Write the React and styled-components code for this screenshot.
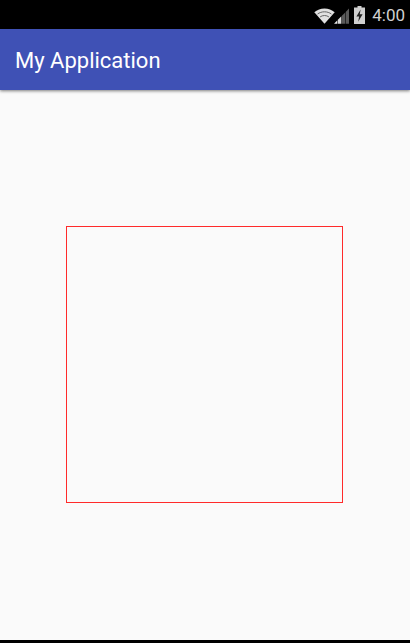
import React from "react";
import styled, { createGlobalStyle } from "styled-components";

const GlobalStyle = createGlobalStyle`
  html, body {
    margin: 0;
    padding: 0;
    background: #000;
  }
`;

const Phone = styled.div`
  display: flex;
  flex-direction: column;
  width: 410px;
  height: 643px;
  overflow: hidden;
  background: #000;
  font-family: Roboto, "Liberation Sans", sans-serif;
`;

const StatusBar = styled.div`
  display: flex;
  align-items: center;
  justify-content: flex-end;
  flex: none;
  height: 29px;
  padding: 1px 5px 0 0;
  box-sizing: border-box;
  background: #000;
`;

const WifiGlyph = styled.svg`
  margin-top: 2px;
`;

const SignalGlyph = styled.svg`
  margin: 2px 0 0 -1px;
`;

const BatteryGlyph = styled.svg`
  margin-left: 5px;
`;

const Clock = styled.span`
  margin-left: 7px;
  font-size: 17px;
  color: #d0d0d0;
`;

const AppBar = styled.header`
  position: relative;
  z-index: 1;
  display: flex;
  align-items: center;
  flex: none;
  height: 61px;
  padding: 1px 0 0 15px;
  box-sizing: border-box;
  background: #3f51b5;
  box-shadow: 0 1px 3px rgba(0, 0, 0, 0.5);
`;

const Title = styled.h1`
  margin: 0;
  font-size: 22px;
  font-weight: 400;
  color: #fff;
`;

const Content = styled.main`
  flex: none;
  height: 550px;
  padding: 136px 0 0 66px;
  box-sizing: border-box;
  background: #fafafa;
`;

const Square = styled.div`
  width: 277px;
  height: 277px;
  box-sizing: border-box;
  border: 1px solid #ff2a2a;
`;

function WifiIcon() {
  return (
    <WifiGlyph width="21" height="16" viewBox="0 0 21 16">
      <path d="M10.5 15.8 0.3 4.2C3.1 1.8 6.6.4 10.5.4s7.4 1.4 10.2 3.8z" fill="#e0e0e0" />
      <path d="M3.6 6C5.5 4.6 7.9 3.8 10.5 3.8s5 .8 6.9 2.2" fill="none" stroke="#666" strokeWidth="1" />
      <path d="M6.1 8.9c1.3-.9 2.8-1.4 4.4-1.4s3.1.5 4.4 1.4" fill="none" stroke="#666" strokeWidth="1" />
    </WifiGlyph>
  );
}

function SignalIcon() {
  return (
    <SignalGlyph width="15" height="16" viewBox="0 0 15 16">
      <path d="M0 15.8 3.4 12.3V15.8z" fill="#e8e8e8" />
      <path d="M3.9 11.8 7.4 8.3V15.8H3.9z" fill="#d8d8d8" />
      <path d="M7.9 7.8 11.2 4.4V15.8H7.9z" fill="#5a5a5a" />
      <path d="M11.7 3.9 15 .6V15.8H11.7z" fill="#5a5a5a" />
    </SignalGlyph>
  );
}

function BatteryIcon() {
  return (
    <BatteryGlyph width="11" height="18" viewBox="0 0 11 18">
      <path d="M3.5 0h4v1.5H11V18H0V1.5h3.5z" fill="#cfcfcf" />
      <path d="M6.6 3.5 2.4 10.4h2.7L4.2 15.8 8.6 8.2H5.8z" fill="#222" />
    </BatteryGlyph>
  );
}

export default function App() {
  return (
    <Phone>
      <GlobalStyle />
      <StatusBar>
        <WifiIcon />
        <SignalIcon />
        <BatteryIcon />
        <Clock>4:00</Clock>
      </StatusBar>
      <AppBar>
        <Title>My Application</Title>
      </AppBar>
      <Content>
        <Square />
      </Content>
    </Phone>
  );
}
